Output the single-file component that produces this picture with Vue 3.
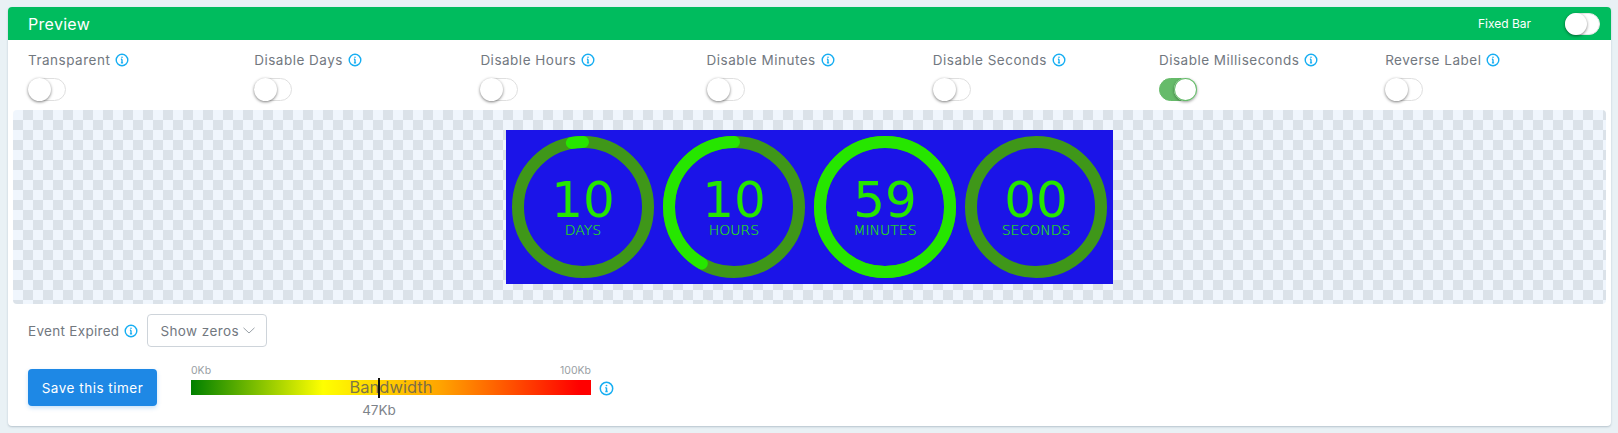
<script setup>
const options = [
  { label: 'Transparent', on: false },
  { label: 'Disable Days', on: false },
  { label: 'Disable Hours', on: false },
  { label: 'Disable Minutes', on: false },
  { label: 'Disable Seconds', on: false },
  { label: 'Disable Milliseconds', on: true },
  { label: 'Reverse Label', on: false },
]
const R = 65
const C = 2 * Math.PI * R
const rings = [
  { value: '10', unit: 'DAYS', frac: 10 / 365 },
  { value: '10', unit: 'HOURS', frac: 10 / 24 },
  { value: '59', unit: 'MINUTES', frac: 1 },
  { value: '00', unit: 'SECONDS', frac: 0 },
].map(r => ({ ...r, dash: `${r.frac * C} ${C}` }))
</script>

<template>
  <div class="page">
    <section class="card">
      <header class="head">
        <span class="title">Preview</span>
        <div class="fixed">
          <span>Fixed Bar</span>
          <span class="toggle head-toggle"><i class="knob"></i></span>
        </div>
      </header>

      <div class="opts">
        <div v-for="o in options" :key="o.label" class="opt">
          <div class="opt-label">
            <span>{{ o.label }}</span>
            <svg class="info" viewBox="0 0 14 14"><circle cx="7" cy="7" r="5.8" /><path d="M7 6.3v3.6M5.9 9.9h2.2M5.9 6.3H7" /><circle class="dot" cx="7" cy="4.2" r=".8" /></svg>
          </div>
          <span class="toggle" :class="{ on: o.on }"><i class="knob"></i></span>
        </div>
      </div>

      <div class="stage">
        <div class="timer">
          <svg v-for="r in rings" :key="r.unit" class="ring" viewBox="0 0 142 142">
            <circle class="track" cx="71" cy="71" :r="R" />
            <circle
              v-if="r.frac > 0"
              class="progress"
              cx="71"
              cy="71"
              :r="R"
              :stroke-dasharray="r.dash"
              transform="rotate(-90 71 71) scale(1 -1) translate(0 -142)"
            />
            <text class="num" x="71" y="81" text-anchor="middle">{{ r.value }}</text>
            <text class="unit" x="71" y="99" text-anchor="middle">{{ r.unit }}</text>
          </svg>
        </div>
      </div>

      <div class="expired">
        <span class="opt-label expired-label">
          <span>Event Expired</span>
          <svg class="info" viewBox="0 0 14 14"><circle cx="7" cy="7" r="5.8" /><path d="M7 6.3v3.6M5.9 9.9h2.2M5.9 6.3H7" /><circle class="dot" cx="7" cy="4.2" r=".8" /></svg>
        </span>
        <div class="select">
          <span>Show zeros</span>
          <svg class="chev" viewBox="0 0 12 7"><path d="M.5.8 6 6l5.5-5.2" /></svg>
        </div>
      </div>

      <div class="actions">
        <button class="save">Save this timer</button>
        <div class="meter">
          <div class="meter-scale"><span>0Kb</span><span>100Kb</span></div>
          <div class="bar">
            <span class="bar-label">Bandwidth</span>
            <i class="marker"></i>
            <span class="bar-value">47Kb</span>
          </div>
        </div>
        <svg class="info meter-info" viewBox="0 0 14 14"><circle cx="7" cy="7" r="5.8" /><path d="M7 6.3v3.6M5.9 9.9h2.2M5.9 6.3H7" /><circle class="dot" cx="7" cy="4.2" r=".8" /></svg>
      </div>
    </section>
  </div>
</template>

<style>
body { background: #e9f1f5; }
</style>

<style scoped>
.page {
  height: 433px;
  box-sizing: border-box;
  padding: 7px 7px 0 8px;
  font-family: Inter, "Open Sans", sans-serif;
  color: #72787f;
}
.card {
  height: 419px;
  box-sizing: border-box;
  background: #fff;
  border-radius: 4px;
  box-shadow: 0 1px 2px rgba(120, 140, 155, .45);
  overflow: hidden;
}
.head {
  height: 33px;
  background: #00bc5e;
  color: #fff;
  display: flex;
  align-items: center;
  justify-content: space-between;
  padding: 0 11px 0 20px;
}
.title { font-size: 16px; letter-spacing: .3px; }
.fixed { display: flex; align-items: center; gap: 34px; font-size: 12px; }
.opts {
  display: grid;
  grid-template-columns: repeat(7, 226.2px);
  padding: 10px 0 0 20px;
}
.opt { display: flex; flex-direction: column; align-items: flex-start; gap: 8px; }
.opt-label {
  display: flex;
  align-items: center;
  gap: 5px;
  height: 20px;
  font-size: 13.5px;
  letter-spacing: .5px;
}
.expired-label { letter-spacing: .3px; }
.info {
  width: 14px;
  height: 14px;
  flex: none;
  fill: none;
  stroke: #17aef2;
  stroke-width: 1.4;
}
.info .dot { fill: #17aef2; stroke: none; }
.toggle {
  display: block;
  position: relative;
  width: 38px;
  height: 23px;
  box-sizing: border-box;
  border: 1px solid #dfdfdf;
  border-radius: 12px;
  background: #fff;
}
.knob {
  position: absolute;
  left: -1px;
  top: -1px;
  width: 23px;
  height: 23px;
  border-radius: 50%;
  background: #fff;
  box-shadow: 0 1px 3px rgba(0, 0, 0, .5);
}
.toggle.on { background: #66bb6a; border-color: #66bb6a; }
.toggle.on .knob { left: auto; right: -1px; box-shadow: 0 1px 3px rgba(0, 0, 0, .4), 0 0 0 1px #66bb6a inset; }
.head-toggle { width: 35px; height: 22px; border-color: #e6e6e6; background: #fff; }
.head-toggle .knob { width: 22px; height: 22px; }
.stage {
  margin: 9px 5px 0;
  height: 194px;
  border-radius: 4px;
  display: flex;
  justify-content: center;
  align-items: flex-start;
  padding-top: 20px;
  box-sizing: border-box;
  background: repeating-conic-gradient(#dbe2e9 0 25%, #f0f6fd 0 50%) 0 0 / 20px 20px;
}
.timer {
  display: flex;
  gap: 9px;
  padding: 6px;
  background: #1b14e8;
}
.ring { width: 142px; height: 142px; display: block; }
.track, .progress { fill: none; stroke-width: 12; }
.track { stroke: #3f9719; }
.progress { stroke: #26e600; stroke-linecap: round; }
.num, .unit { fill: #26e600; font-family: "DejaVu Sans", sans-serif; }
.num { font-size: 50px; }
.unit { font-size: 14px; font-weight: 200; stroke: #26e600; stroke-width: .15px; }
.expired {
  display: flex;
  align-items: center;
  gap: 9px;
  margin-top: 10px;
  padding-left: 20px;
}
.select {
  width: 120px;
  height: 33px;
  box-sizing: border-box;
  border: 1px solid #ced4da;
  border-radius: 4px;
  display: flex;
  align-items: center;
  gap: 4px;
  padding-left: 12px;
  font-size: 13.5px;
  letter-spacing: .4px;
}
.chev { width: 12px; height: 7px; fill: none; stroke: #9aa1a8; stroke-width: 1; }
.actions {
  display: flex;
  align-items: flex-start;
  margin-top: 22px;
  padding-left: 20px;
}
.save {
  width: 129px;
  height: 37px;
  border: 0;
  border-radius: 4px;
  background: #1e88e5;
  color: #fff;
  font: 13.5px Inter, "Open Sans", sans-serif;
  letter-spacing: .5px;
  padding: 0;
  box-shadow: 0 2px 4px rgba(30, 136, 229, .25);
}
.meter { width: 400px; margin-left: 34px; margin-top: -7px; }
.meter-scale {
  display: flex;
  justify-content: space-between;
  height: 18px;
  line-height: 18px;
  font-size: 10.5px;
  color: #9a9fa5;
}
.bar {
  position: relative;
  height: 15px;
  background: linear-gradient(90deg, #008000 0%, #ffff00 33%, #ffa500 62%, #ff0000 97%);
}
.bar-label {
  position: absolute;
  left: 0;
  right: 0;
  top: -3px;
  line-height: 20px;
  text-align: center;
  font-size: 16.5px;
  color: rgba(90, 90, 90, .8);
}
.marker {
  position: absolute;
  left: 187px;
  top: -2px;
  width: 1.5px;
  height: 20px;
  background: #111;
}
.bar-value {
  position: absolute;
  left: 188px;
  top: 21px;
  transform: translateX(-50%);
  font-size: 13.5px;
  line-height: 18px;
  color: #7d838a;
}
.meter-info { margin: 12px 0 0 8px; width: 15px; height: 15px; }
</style>
